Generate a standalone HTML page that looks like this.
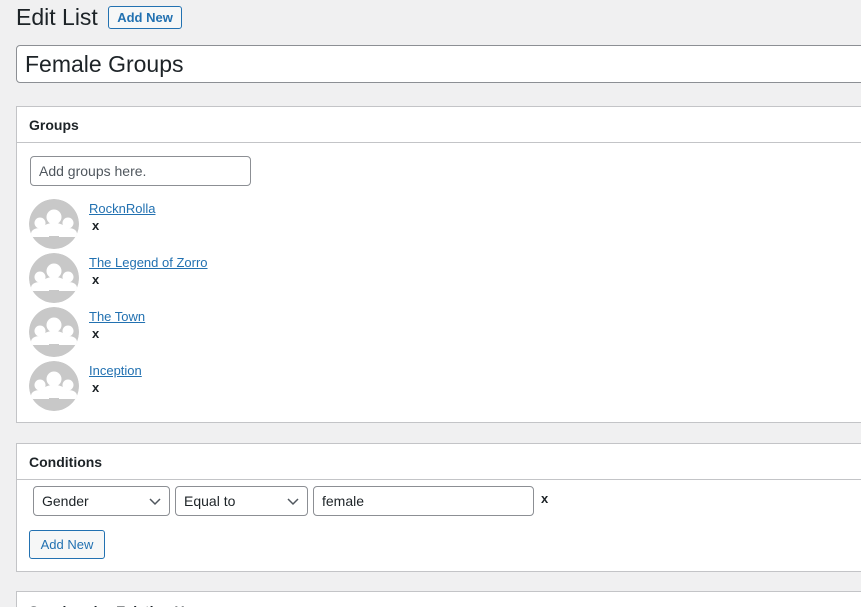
<!DOCTYPE html>
<html style="width:861px;height:607px;overflow:hidden"><head><style>
*{box-sizing:border-box;margin:0;padding:0}
body{width:861px;height:607px;overflow:hidden;background:#f0f0f1;font-family:"Liberation Sans",sans-serif;color:#1d2327;position:relative}
.a{position:absolute}
.panel{position:absolute;left:16px;width:900px;background:#fff;border:1px solid #c3c4c7}
.ph{height:36px;border-bottom:1px solid #c3c4c7;font-weight:bold;font-size:14px;padding:10px 0 0 12px}
.btn{position:absolute;border:1px solid #2271b1;color:#2271b1;background:#f6f7f7;border-radius:3px;font-size:13px;text-align:center}
.inp{position:absolute;border:1px solid #8c8f94;border-radius:4px;background:#fff;font-size:14px;padding-left:8px}
.av{position:absolute;left:12px;width:50px;height:50px;border-radius:50%;overflow:hidden}
.lk{position:absolute;left:72px;font-size:13px;color:#2271b1;text-decoration:underline}
.x{position:absolute;left:75px;font-size:13px;font-weight:bold}
.chev{position:absolute;right:8px;top:9px}
</style></head><body>
<div class="a" style="left:16px;top:4px;font-size:23px;">Edit List</div>
<div class="btn" style="left:108px;top:6px;width:74px;height:23px;font-weight:bold;line-height:21px;">Add New</div>
<div class="inp" style="left:16px;top:45px;width:900px;height:38px;font-size:23px;line-height:36px;">Female Groups</div>

<div class="panel" style="top:106px;height:317px;">
<div class="ph">Groups</div>
<div class="inp" style="left:13px;top:49px;width:221px;height:30px;line-height:28px;color:#50575e;">Add groups here.</div>
<div class="a" style="left:0;top:92px;width:300px;">
<svg width="0" height="0" style="position:absolute"><defs><g id="g"><circle cx="25" cy="25" r="25" fill="#c8c8c8"/><g fill="#fff"><circle cx="11" cy="24" r="5.5"/><path d="M2 38v-3c0-4 4-6 9-6s9 2 9 6v3z"/><circle cx="39" cy="24" r="5.5"/><path d="M30 38v-3c0-4 4-6 9-6s9 2 9 6v3z"/><circle cx="25" cy="18" r="7.5"/><path d="M12 37v-5c0-5 6-8 13-8s13 3 13 8v5z"/></g></g></defs></svg>
<svg class="av" style="top:0" viewBox="0 0 50 50"><use href="#g"/></svg>
<div class="lk" style="top:2px">RocknRolla</div><div class="x" style="top:19px">x</div>
<svg class="av" style="top:54px" viewBox="0 0 50 50"><use href="#g"/></svg>
<div class="lk" style="top:56px">The Legend of Zorro</div><div class="x" style="top:73px">x</div>
<svg class="av" style="top:108px" viewBox="0 0 50 50"><use href="#g"/></svg>
<div class="lk" style="top:110px">The Town</div><div class="x" style="top:127px">x</div>
<svg class="av" style="top:162px" viewBox="0 0 50 50"><use href="#g"/></svg>
<div class="lk" style="top:164px">Inception</div><div class="x" style="top:181px">x</div>
</div>
</div>

<div class="panel" style="top:443px;height:129px;">
<div class="ph">Conditions</div>
<div class="inp" style="left:16px;top:42px;width:137px;height:30px;line-height:28px;">Gender<svg class="chev" width="12" height="10" viewBox="0 0 12 10"><path d="M1 3l5 5 5-5" fill="none" stroke="#50575e" stroke-width="1.5"/></svg></div>
<div class="inp" style="left:158px;top:42px;width:133px;height:30px;line-height:28px;">Equal to<svg class="chev" width="12" height="10" viewBox="0 0 12 10"><path d="M1 3l5 5 5-5" fill="none" stroke="#50575e" stroke-width="1.5"/></svg></div>
<div class="inp" style="left:296px;top:42px;width:221px;height:30px;line-height:28px;">female</div>
<div class="a" style="left:524px;top:47px;font-size:13px;font-weight:bold;">x</div>
<div class="btn" style="left:12px;top:86px;width:76px;height:29px;line-height:27px;">Add New</div>
</div>

<div class="panel" style="top:591px;height:40px;">
<div class="ph" style="border:0;padding-top:11px">Synchronize Existing Users</div>
</div>
</body></html>
